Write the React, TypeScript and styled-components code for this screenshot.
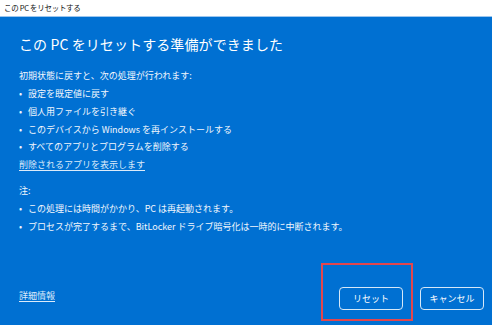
import React from "react";
import styled, { createGlobalStyle } from "styled-components";

const Global = createGlobalStyle`
  html, body { margin: 0; padding: 0; }
  body {
    width: 492px;
    height: 325px;
    overflow: hidden;
    font-family: "Noto Sans CJK JP", "Noto Sans", sans-serif;
    background: #0070d2;
  }
`;

const Window = styled.div`
  width: 492px;
  height: 325px;
  display: flex;
  flex-direction: column;
  background: #0070d2;
  color: #ffffff;
`;

const TitleBar = styled.div`
  height: 16px;
  flex: none;
  background: #ffffff;
  border-bottom: 1px solid #9cc6ee;
  color: #111;
  font-size: 7.5px;
  line-height: 15px;
  padding-left: 4px;
  letter-spacing: -0.3px;
`;

const Body = styled.div`
  flex: 1;
  display: flex;
  flex-direction: column;
  padding: 16px 8px 8px 19px;
  position: relative;
`;

const Heading = styled.h1`
  margin: 0;
  font-weight: 400;
  font-size: 14px;
  line-height: 22px;
  letter-spacing: 0.1px;
`;

const Text = styled.div`
  font-size: 9px;
  line-height: 18px;
  color: #f2f7fd;
`;

const Section = styled.div<{ $top: number }>`
  margin-top: ${(p) => p.$top}px;
  display: flex;
  flex-direction: column;
`;

const Item = styled.div`
  display: flex;
  font-size: 9px;
  line-height: 17.8px;
  color: #f2f7fd;
`;

const Bullet = styled.span`
  width: 9px;
  flex: none;
`;

const Link = styled.span`
  font-size: 9px;
  line-height: 18px;
  color: #dcebfa;
  text-decoration: underline;
  text-underline-offset: 2px;
  align-self: flex-start;
`;

const Footer = styled.div`
  margin-top: auto;
  display: flex;
  align-items: center;
  justify-content: space-between;
  padding-bottom: 7px;
`;

const Buttons = styled.div`
  display: flex;
  gap: 17px;
  position: relative;
`;

const Button = styled.button`
  width: 64px;
  height: 23px;
  border: 1.5px solid #d6e8f8;
  border-radius: 4px;
  background: #0070d2;
  color: #ffffff;
  font-family: inherit;
  font-size: 9px;
  padding: 0;
`;

const Highlight = styled.div`
  position: absolute;
  left: -18px;
  top: -24px;
  width: 88px;
  height: 54px;
  border: 2px solid #e4464c;
  pointer-events: none;
`;

const items1 = [
  "設定を既定値に戻す",
  "個人用ファイルを引き継ぐ",
  "このデバイスから Windows を再インストールする",
  "すべてのアプリとプログラムを削除する",
];

const items2 = [
  "この処理には時間がかかり、PC は再起動されます。",
  "プロセスが完了するまで、BitLocker ドライブ暗号化は一時的に中断されます。",
];

export default function App() {
  return (
    <>
      <Global />
      <Window>
        <TitleBar>この PC をリセットする</TitleBar>
        <Body>
          <Heading>この PC をリセットする準備ができました</Heading>
          <Section $top={12}>
            <Text>初期状態に戻すと、次の処理が行われます:</Text>
            {items1.map((t) => (
              <Item key={t}>
                <Bullet>•</Bullet>
                {t}
              </Item>
            ))}
            <Link>削除されるアプリを表示します</Link>
          </Section>
          <Section $top={8}>
            <Text>注:</Text>
            {items2.map((t) => (
              <Item key={t}>
                <Bullet>•</Bullet>
                {t}
              </Item>
            ))}
          </Section>
          <Footer>
            <Link>詳細情報</Link>
            <Buttons>
              <Highlight />
              <Button>リセット</Button>
              <Button>キャンセル</Button>
            </Buttons>
          </Footer>
        </Body>
      </Window>
    </>
  );
}
